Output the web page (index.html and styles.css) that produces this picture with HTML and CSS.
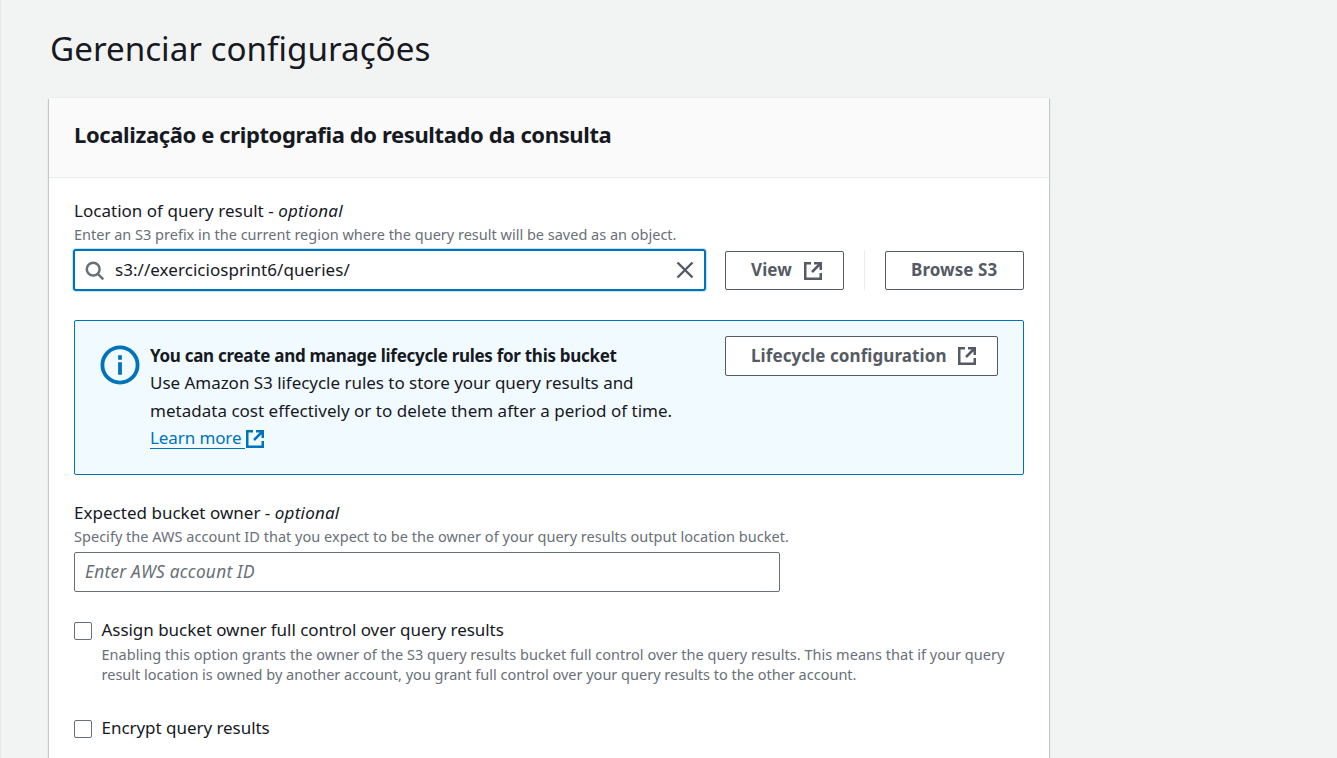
FILE: index.html
```html
<!DOCTYPE html>
<html lang="pt-BR">
<head>
<meta charset="utf-8">
<title>Gerenciar configurações</title>
<link rel="stylesheet" href="styles.css">
</head>
<body>
<svg class="defs" width="0" height="0" aria-hidden="true">
  <symbol id="external" viewBox="0 0 18 18">
    <path d="M7 1.25H1.25v15.5h15.5V11M10 1.25h6.75V8M16.5 1.5L8 10" fill="none" stroke="currentColor" stroke-width="2.5"/>
  </symbol>
</svg>
<main class="page">
  <h1 class="page-title">Gerenciar configurações</h1>
  <section class="card">
    <header class="card-header"><h2 class="card-title">Localização e criptografia do resultado da consulta</h2></header>
    <div class="card-body">
      <div class="field">
        <label class="label">Location of query result - <em>optional</em></label>
        <p class="hint raised">Enter an S3 prefix in the current region where the query result will be saved as an object.</p>
        <div class="location-row">
          <div class="search">
            <svg class="search-icon" viewBox="0 0 20 20"><circle cx="8.2" cy="8.2" r="6.4"/><path d="M12.8 12.8L18.3 18.3"/></svg>
            <span class="search-value">s3://exerciciosprint6/queries/</span>
            <svg class="clear-icon" viewBox="0 0 18 18"><path d="M1.5 1.5L16.5 16.5M16.5 1.5L1.5 16.5"/></svg>
          </div>
          <button class="button view"><span>View</span><svg class="ext"><use href="#external"/></svg></button>
          <span class="divider"></span>
          <button class="button browse"><span>Browse S3</span></button>
        </div>
      </div>
      <div class="alert">
        <svg class="info-icon" viewBox="0 0 40 40"><circle cx="20" cy="20" r="17.6"/><path d="M20 10.2v4.6M20 17.2v12.6"/></svg>
        <div class="alert-text">
          <strong>You can create and manage lifecycle rules for this bucket</strong>
          <p>Use Amazon S3 lifecycle rules to store your query results and</p>
          <p class="second">metadata cost effectively or to delete them after a period of time.</p>
          <a class="link"><span class="link-text">Learn more</span><svg class="ext"><use href="#external"/></svg></a>
        </div>
        <button class="button lifecycle"><span>Lifecycle configuration</span><svg class="ext"><use href="#external"/></svg></button>
      </div>
      <div class="field">
        <label class="label">Expected bucket owner - <em>optional</em></label>
        <p class="hint raised wide">Specify the AWS account ID that you expect to be the owner of your query results output location bucket.</p>
        <div class="account">Enter AWS account ID</div>
      </div>
      <div class="check">
        <span class="box"></span>
        <div>
          <div class="label check-label">Assign bucket owner full control over query results</div>
          <p class="hint wide">Enabling this option grants the owner of the S3 query results bucket full control over the query results. This means that if your query</p>
          <p class="hint">result location is owned by another account, you grant full control over your query results to the other account.</p>
        </div>
      </div>
      <div class="check encrypt">
        <span class="box"></span>
        <div class="label check-label">Encrypt query results</div>
      </div>
    </div>
  </section>
</main>
</body>
</html>
```
FILE: styles.css
```css
* { box-sizing: border-box; }
body {
  margin: 0;
  height: 758px;
  overflow: hidden;
  background: #f2f3f3;
  border-left: 1px solid #e6e9e9;
  color: #16191f;
  font: 17px/27.5px "Noto Sans", "Open Sans", sans-serif;
}
.defs { position: absolute; }
h1, h2, p { margin: 0; white-space: nowrap; }
.page { padding: 24px 0 0 48px; }
.page-title { height: 50px; padding-left: 1px; line-height: 49px; font-size: 33.2px; font-weight: 400; }
.card {
  width: 1000px;
  height: 660px;
  margin-top: 24px;
  background: #fff;
  box-shadow: 0 1px 1px 0 rgba(0,28,36,.3), 1px 1px 1px 0 rgba(0,28,36,.15), -1px 1px 1px 0 rgba(0,28,36,.15), 0 -1px 0 0 #eaeded;
}
.card-header { height: 80px; padding: 22px 25px 0; background: #fafafa; border-bottom: 1px solid #eaeded; }
.card-title { font-size: 22px; line-height: 28px; font-weight: 700; letter-spacing: -.38px; }
.card-body { padding: 19px 25px 0; }
.label { display: block; height: 28px; line-height: 28px; letter-spacing: .02px; }
.label em { letter-spacing: .22px; }
.check-label { letter-spacing: -.04px; }
.hint { height: 20px; line-height: 20px; font-size: 14.5px; color: #687078; }
.raised { line-height: 18px; }
.wide { letter-spacing: .025px; }
.location-row { display: flex; align-items: center; height: 40px; margin-top: 5px; }
.search {
  display: flex;
  align-items: center;
  width: 633px;
  height: 42px;
  margin: 0 19px 0 -1px;
  padding: 0 10px;
  border: 2px solid #0073bb;
  border-radius: 3px;
  box-shadow: 0 0 0 1px rgba(0,161,201,.25);
}
.search-icon { width: 20px; height: 20px; margin-top: 1px; fill: none; stroke: #687078; stroke-width: 2.5; }
.search-value { flex: 1; margin-left: 10px; letter-spacing: .05px; }
.clear-icon { width: 18px; height: 18px; fill: none; stroke: #545b64; stroke-width: 2.4; }
.button {
  display: flex;
  align-items: center;
  justify-content: space-between;
  flex: none;
  height: 39px;
  padding: 0 21px 0 25px;
  background: #fff;
  border: 1px solid #545b64;
  border-radius: 2px;
  color: #545b64;
  font: 700 17px/27px "Noto Sans", sans-serif;
  letter-spacing: .08px;
}
.button span { padding-bottom: 2px; }
.view { width: 119px; }
.view .ext { margin-top: 1px; }
.browse { width: 139px; }
.divider { width: 1px; height: 40px; margin: 0 20px; background: #eaeded; }
.ext { width: 18px; height: 18px; flex: none; }
.alert {
  display: flex;
  height: 155px;
  margin: 30px 0 24px;
  padding: 15px 25px 0;
  background: #f1faff;
  border: 1px solid #0073bb;
  border-radius: 2px;
}
.info-icon { width: 40px; height: 40px; margin-top: 9px; fill: none; stroke: #0073bb; stroke-width: 3.8; }
.alert-text { width: 565px; margin: 6px 0 0 10px; height: 120px; }
.alert-text strong { display: block; height: 27px; letter-spacing: -.29px; }
.alert-text p { letter-spacing: -.03px; }
.alert-text .second { letter-spacing: .015px; }
.lifecycle { width: 273px; height: 40px; margin-left: 10px; }
.link { display: flex; align-items: center; padding-top: 3px; color: #0073bb; letter-spacing: -.1px; }
.link-text { width: 95px; height: 22px; line-height: 21px; border-bottom: 1px solid #0073bb; }
.link .ext { margin-left: 1px; margin-top: 1px; }
.account {
  width: 706px;
  height: 40px;
  margin-top: 5px;
  padding: 0 10px;
  line-height: 38px;
  border: 1px solid #687078;
  border-radius: 2px;
  color: #687078;
  font-size: 17.3px;
  font-style: italic;
  letter-spacing: .25px;
}
.check { display: flex; margin-top: 24px; }
.box { width: 18px; height: 18px; margin: 6px 9.5px 0 0; flex: none; border: 1px solid #687078; border-radius: 2px; }
.encrypt { margin-top: 30px; }
```
